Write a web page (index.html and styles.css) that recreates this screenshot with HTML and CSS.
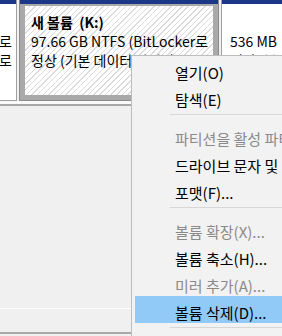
FILE: index.html
```html
<!DOCTYPE html>
<html>
	<head>
		<title>디스크 관리</title>
		<link rel="stylesheet" href="styles.css">
	</head>
	<body>
		<div class="dia">
			<div class="phanvung trai">
				<div class="dau"></div>
				<div class="than">
					<p>&nbsp;</p>
					<p>로</p>
					<p>로</p>
				</div>
			</div>
			<div class="phanvung chon">
				<div class="dau"></div>
				<div class="than">
					<p class="ten">새 볼륨&nbsp;&nbsp;(K:)</p>
					<p>97.66 GB NTFS (BitLocker로</p>
					<p>정상 (기본 데이터 파티션)</p>
				</div>
			</div>
			<div class="phanvung phai">
				<div class="dau"></div>
				<div class="than">
					<p>&nbsp;</p>
					<p>536 MB</p>
					<p>정상 (복구)</p>
				</div>
			</div>
		</div>
		<div class="duoi-dia"></div>
		<div class="khung"></div>
		<div class="dong-cuoi"></div>

		<div class="menu">
			<div class="muc">열기(O)</div>
			<div class="muc">탐색(E)</div>
			<div class="ngan"></div>
			<div class="muc tat">파티션을 활성 파티션으로 표시(M)</div>
			<div class="muc">드라이브 문자 및 경로 변경(C)...</div>
			<div class="muc">포맷(F)...</div>
			<div class="ngan"></div>
			<div class="muc tat">볼륨 확장(X)...</div>
			<div class="muc">볼륨 축소(H)...</div>
			<div class="muc tat">미러 추가(A)...</div>
			<div class="muc sang">볼륨 삭제(D)...</div>
			<div class="ngan"></div>
		</div>
	</body>
</html>
```

FILE: styles.css
```css
*{
	box-sizing: border-box;
}
body{
	margin: 0;
	width: 282px;
	height: 336px;
	overflow: hidden;
	position: relative;
	background: #f0f0f0;
	font-family: "Noto Sans CJK KR", "Liberation Sans", sans-serif;
	font-size: 14px;
	color: #000;
}
p{
	margin: 0;
	white-space: nowrap;
	line-height: 19px;
}
.dia{
	display: flex;
	gap: 2px;
	height: 101px;
	overflow: hidden;
}
.phanvung{
	display: flex;
	flex-direction: column;
	flex-shrink: 0;
	background: #fff;
	border: 1px solid #a0a0a0;
	border-top: 0;
}
.dau{
	height: 4px;
	background: #1b3788;
	flex-shrink: 0;
}
.than{
	flex: 1;
	overflow: hidden;
	padding-top: 9px;
}
.trai{
	width: 17px;
	border-left: 0;
}
.trai .than{
	display: flex;
	flex-direction: column;
	align-items: flex-end;
	padding-right: 4px;
}
.chon{
	width: 200px;
	border-color: #8c8c8c;
}
.chon .than{
	border: 5px solid #a9a9a9;
	border-top-width: 2px;
	padding-top: 7px;
	padding-left: 6px;
	background: repeating-linear-gradient(135deg, #fff 0, #fff 3px, #dcdcdc 3px, #dcdcdc 4px);
}
.ten{
	font-weight: bold;
}
.phai{
	width: 70px;
}
.phai .than{
	padding-left: 8px;
}
.duoi-dia{
	height: 5px;
	background: #fafafa;
	border-bottom: 2px solid #a8a8a8;
}
.khung{
	height: 203px;
	border-bottom: 1px solid #fff;
}
.dong-cuoi{
	height: 25px;
	border-bottom: 2px solid #a8a8a8;
}

/* menu chuot phai */
.menu{
	position: absolute;
	top: 55px;
	left: 131px;
	width: 151px;
	height: 281px;
	overflow: hidden;
	padding-left: 3px;
	background: #f2f2f2;
	border: 1px solid #bdbdbd;
	border-right: 0;
	border-bottom: 0;
	font-size: 15px;
}
.muc{
	height: 27px;
	line-height: 27px;
	padding-left: 40px;
	padding-top: 3px;
	white-space: nowrap;
	overflow: hidden;
}
.tat{
	color: #8a8a8a;
}
.sang{
	background: #91c9f7;
}
.ngan{
	height: 12px;
	margin-left: 35px;
	padding-top: 4px;
}
.ngan::after{
	content: "";
	display: block;
	height: 1px;
	background: #d7d7d7;
}
```
